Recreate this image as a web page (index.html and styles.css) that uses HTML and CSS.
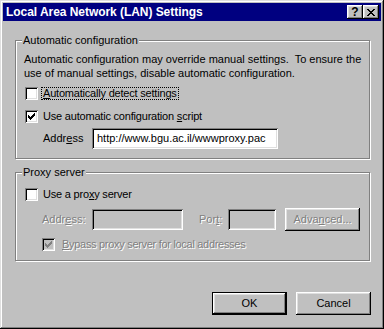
FILE: index.html
```html
<!DOCTYPE html>
<html>
<head>
    <title>Local Area Network (LAN) Settings</title>
    <link rel="stylesheet" href="styles.css">
</head>
<body>
    <div class="window">
        <div class="titlebar">
            <span class="title">Local Area Network (LAN) Settings</span>
            <div class="title-btns">
                <span class="tbtn help">?</span>
                <span class="tbtn">
                    <svg width="8" height="7" viewBox="0 0 8 7" shape-rendering="crispEdges">
                        <path d="M0 0h2v1h-2zM6 0h2v1h-2zM1 1h2v1h-2zM5 1h2v1h-2zM2 2h4v1h-4zM3 3h2v1h-2zM2 4h4v1h-4zM1 5h2v1h-2zM5 5h2v1h-2zM0 6h2v1h-2zM6 6h2v1h-2z" fill="#000"/>
                    </svg>
                </span>
            </div>
        </div>

        <div class="content">
            <!-- configuracion automatica -->
            <div class="group auto">
                <div class="legend">Automatic configuration</div>
                <p class="info">Automatic configuration may override manual settings.&nbsp; To ensure the<br>use of manual settings, disable automatic configuration.</p>
                <div class="row first">
                    <span class="check"></span>
                    <span class="label focus"><u>A</u>utomatically detect settings</span>
                </div>
                <div class="row second">
                    <span class="check"><svg width="7" height="7" viewBox="0 0 7 7" shape-rendering="crispEdges"><path d="M0 2h1v3h-1zM1 3h1v3h-1zM2 4h1v3h-1zM3 3h1v3h-1zM4 2h1v3h-1zM5 1h1v3h-1zM6 0h1v3h-1z" fill="#000"/></svg></span>
                    <span class="label">Use automatic configuration <u>s</u>cript</span>
                </div>
                <div class="row addr">
                    <span class="addr-label">Addr<u>e</u>ss</span>
                    <span class="textbox url">http://www.bgu.ac.il/wwwproxy.pac</span>
                </div>
            </div>

            <!-- servidor proxy -->
            <div class="group proxy">
                <div class="legend">Proxy server</div>
                <div class="row first">
                    <span class="check"></span>
                    <span class="label">Use a pro<u>x</u>y server</span>
                </div>
                <div class="row fields">
                    <span class="off proxy-label">Addr<u>e</u>ss:</span>
                    <span class="textbox off-box proxy-addr"></span>
                    <span class="off port-label">Por<u>t</u>:</span>
                    <span class="textbox off-box port"></span>
                    <span class="button off-btn"><span class="off">Adva<u>n</u>ced...</span></span>
                </div>
                <div class="row bypass">
                    <span class="check off-check"><svg width="7" height="7" viewBox="0 0 7 7" shape-rendering="crispEdges"><path d="M0 2h1v3h-1zM1 3h1v3h-1zM2 4h1v3h-1zM3 3h1v3h-1zM4 2h1v3h-1zM5 1h1v3h-1zM6 0h1v3h-1z" fill="#808080"/></svg></span>
                    <span class="off bypass-label"><u>B</u>ypass proxy server for local addresses</span>
                </div>
            </div>

            <div class="actions">
                <span class="button default"><span class="button inner">OK</span></span>
                <span class="button">Cancel</span>
            </div>
        </div>
    </div>
</body>
</html>
```

FILE: styles.css
```css
body {
    margin: 0;
    font-family: 'Liberation Sans', Arial, sans-serif;
    font-size: 11px;
    line-height: 13px;
    color: #000;
    background: #c0c0c0;
}
.window {
    width: 384px;
    height: 329px;
    box-sizing: border-box;
    padding: 3px;
    background: #c0c0c0;
    box-shadow: inset -1px -1px #000, inset 1px 1px #dfdfdf, inset -2px -2px #808080, inset 2px 2px #fff;
}
.titlebar {
    height: 18px;
    background: #000080;
    display: flex;
    align-items: center;
    justify-content: space-between;
    padding: 0 2px 0 3px;
}
.title {
    color: #fff;
    font-weight: bold;
    font-size: 12px;
    letter-spacing: -0.05px;
}
.title-btns {
    display: flex;
}
.tbtn {
    width: 16px;
    height: 14px;
    background: #c0c0c0;
    display: flex;
    align-items: center;
    justify-content: center;
    box-shadow: inset -1px -1px #000, inset 1px 1px #fff, inset -2px -2px #808080, inset 2px 2px #dfdfdf;
}
.help {
    font-weight: bold;
    font-size: 12px;
}
.content {
    padding: 19px 0 0 12px;
}
.group {
    width: 355px;
    box-sizing: border-box;
    border: 1px solid #808080;
    box-shadow: inset 1px 1px #fff, 1px 1px #fff;
    padding: 0 8px 9px 8px;
}
.proxy {
    margin-top: 13px;
}
.legend {
    width: fit-content;
    margin: -7px 0 0 -2px;
    padding: 0 1px;
    background: #c0c0c0;
}
.info {
    margin: 5px 0 0 0;
    line-height: 14px;
    white-space: nowrap;
}
.row {
    display: flex;
    align-items: center;
}
.auto .first {
    margin-top: 7px;
}
.auto .second {
    margin-top: 10px;
}
.addr {
    margin-top: 5px;
}
.proxy .first {
    margin-top: 9px;
}
.check {
    width: 13px;
    height: 13px;
    box-sizing: border-box;
    margin-left: 1px;
    background: #fff;
    display: flex;
    align-items: center;
    justify-content: center;
    box-shadow: inset 1px 1px #808080, inset -1px -1px #fff, inset 2px 2px #000, inset -2px -2px #dfdfdf;
}
.label {
    margin-left: 3px;
    padding: 0 1px;
    border: 1px solid transparent;
    line-height: 11px;
    letter-spacing: -0.2px;
}
.focus {
    border: 1px dotted #000;
}
.addr-label {
    margin-left: 19px;
    width: 49px;
}
.textbox {
    height: 21px;
    box-sizing: border-box;
    background: #fff;
    display: flex;
    align-items: center;
    padding-left: 5px;
    box-shadow: inset 1px 1px #808080, inset -1px -1px #fff, inset 2px 2px #000, inset -2px -2px #dfdfdf;
}
.url {
    width: 186px;
}
.off {
    color: #808080;
    text-shadow: 1px 1px #fff;
}
.off-box {
    background: #c0c0c0;
}
.fields {
    margin-top: 7px;
}
.proxy-label {
    margin-left: 18px;
    width: 50px;
}
.proxy-addr {
    width: 91px;
}
.port-label {
    margin-left: 16px;
    width: 29px;
}
.port {
    width: 48px;
}
.button {
    width: 75px;
    height: 23px;
    box-sizing: border-box;
    background: #c0c0c0;
    display: flex;
    align-items: center;
    justify-content: center;
    box-shadow: inset -1px -1px #000, inset 1px 1px #fff, inset -2px -2px #808080, inset 2px 2px #dfdfdf;
}
.off-btn {
    margin-left: 9px;
}
.bypass {
    margin-top: 7px;
}
.off-check {
    margin-left: 18px;
    background: #c0c0c0;
}
.bypass-label {
    margin-left: 7px;
    letter-spacing: -0.3px;
}
.actions {
    width: 356px;
    margin-top: 31px;
    display: flex;
    justify-content: flex-end;
    gap: 9px;
}
.default {
    border: 1px solid #000;
    box-shadow: none;
}
.inner {
    width: 73px;
    height: 21px;
}
```
